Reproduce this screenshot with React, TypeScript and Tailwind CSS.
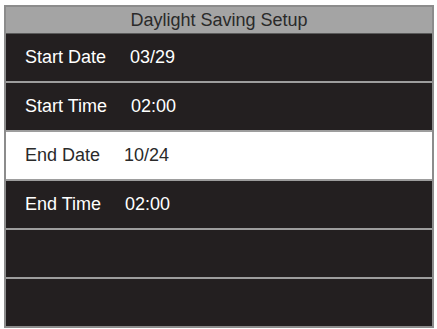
const ROWS: { label: string; value: string; selected?: boolean }[] = [
  { label: 'Start Date', value: '03/29' },
  { label: 'Start Time', value: '02:00' },
  { label: 'End Date', value: '10/24', selected: true },
  { label: 'End Time', value: '02:00' },
  { label: '', value: '' },
  { label: '', value: '' },
];

export default function App() {
  return (
    <div className="h-[329px] w-[437px] bg-white pl-[4px] pt-[5px] font-['Liberation_Sans',Arial,sans-serif]">
      <div className="flex w-[430px] flex-col border-2 border-[#8c8c8c] bg-[#231f20]">
        <div className="flex h-[27px] items-center justify-center border-b border-[#5a5a5a] bg-[#a4a4a4] text-[18px] text-[#2a2a2a]">
          Daylight Saving Setup
        </div>
        {ROWS.map((row, i) => (
          <div
            key={i}
            className={`flex items-center gap-6 pl-[19px] text-[18px] ${
              i < ROWS.length - 1 ? 'h-[49px] border-b-2 border-[#9d9d9d]' : 'h-[47px]'
            } ${row.selected ? 'bg-white text-[#2a2a2a]' : 'bg-[#231f20] text-white'}`}
          >
            {row.label && <span>{row.label}</span>}
            {row.value && <span>{row.value}</span>}
          </div>
        ))}
      </div>
    </div>
  );
}
